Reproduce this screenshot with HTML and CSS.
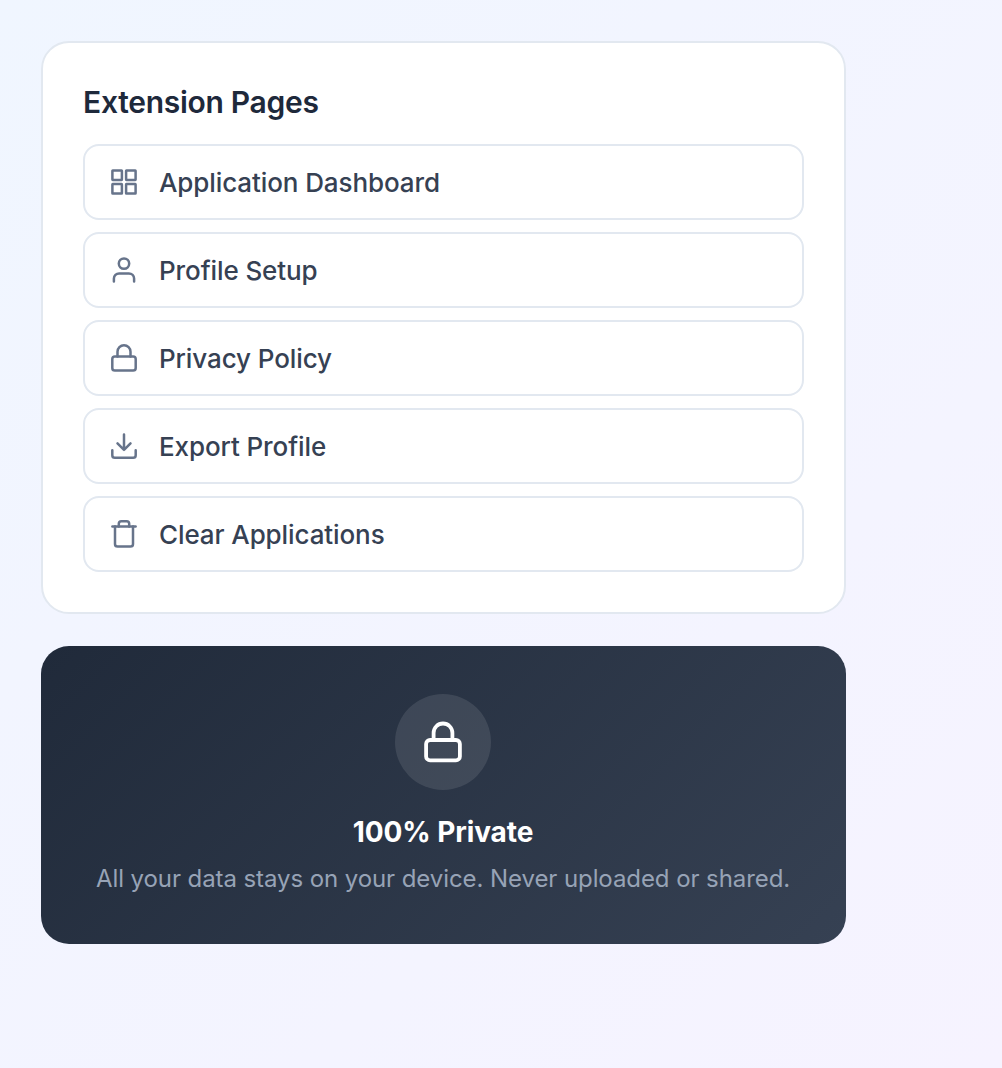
FILE: index.html
```html
<!DOCTYPE html>
<html lang="en">
<head>
  <meta charset="UTF-8">
  <meta name="viewport" content="width=device-width, initial-scale=1.0">
  <title>Extension Pages</title>
  <link rel="stylesheet" href="styles.css">
</head>
<body>
  <main class="sidebar">
    <section class="card">
      <h2 class="card-title">Extension Pages</h2>
      <nav class="links">
        <a class="link" href="#">
          <svg class="icon" viewBox="0 0 30 30">
            <rect x="3.4" y="3.4" width="9.5" height="9.5" rx="0.3"/>
            <rect x="17.1" y="3.4" width="9.5" height="9.5" rx="0.3"/>
            <rect x="3.4" y="17.1" width="9.5" height="9.5" rx="0.3"/>
            <rect x="17.1" y="17.1" width="9.5" height="9.5" rx="0.3"/>
          </svg>
          <span>Application Dashboard</span>
        </a>
        <a class="link" href="#">
          <svg class="icon" viewBox="0 0 30 30">
            <circle cx="15" cy="8.6" r="5.2"/>
            <path d="M4.9 26.6v-3a5.2 5.2 0 0 1 5.2-5.2h9.8a5.2 5.2 0 0 1 5.2 5.2v3"/>
          </svg>
          <span>Profile Setup</span>
        </a>
        <a class="link" href="#">
          <svg class="icon" viewBox="0 0 30 30">
            <rect x="3.3" y="13.4" width="23.4" height="14.1" rx="2.6"/>
            <path d="M8.5 13.4V8.7a6.5 6.5 0 0 1 13 0v4.7"/>
          </svg>
          <span>Privacy Policy</span>
        </a>
        <a class="link" href="#">
          <svg class="icon" viewBox="0 0 30 30">
            <path d="M3.3 19.2v5a2.6 2.6 0 0 0 2.6 2.6h18.2a2.6 2.6 0 0 0 2.6-2.6v-5"/>
            <path d="M8.5 12.3l6.5 6.5 6.5-6.5M15 18.8V3.4"/>
          </svg>
          <span>Export Profile</span>
        </a>
        <a class="link" href="#">
          <svg class="icon" viewBox="0 0 30 30">
            <path d="M3.4 7.5h23.2"/>
            <path d="M24 7.5v17.4a2.6 2.6 0 0 1-2.6 2.6H8.6A2.6 2.6 0 0 1 6 24.9V7.5"/>
            <path d="M9.8 7.5V4.8a2.6 2.6 0 0 1 2.6-2.6h5.2a2.6 2.6 0 0 1 2.6 2.6v2.7"/>
          </svg>
          <span>Clear Applications</span>
        </a>
      </nav>
    </section>

    <section class="privacy">
      <div class="privacy-icon">
        <svg viewBox="0 0 48 48">
          <rect x="7.1" y="22" width="33.8" height="20.4" rx="4"/>
          <path d="M14.6 22v-7.1a9.4 9.4 0 0 1 18.8 0V22"/>
        </svg>
      </div>
      <h3 class="privacy-title">100% Private</h3>
      <p class="privacy-text">All your data stays on your device. Never uploaded or shared.</p>
    </section>
  </main>
</body>
</html>
```

FILE: styles.css
```css
* { box-sizing: border-box; margin: 0; padding: 0; }
body {
  min-height: 100vh;
  padding: 41px;
  font-family: Inter, "Liberation Sans", sans-serif;
  background: linear-gradient(135deg, #f0f6ff 0%, #f6f3ff 100%);
}

.sidebar { display: flex; flex-direction: column; gap: 32px; width: 805px; }

.card { padding: 41px 40px 40px; background: #fff; border: 2px solid #e2e8f0; border-radius: 28px; }
.card-title {
  margin-bottom: 23px;
  font-size: 30px;
  font-weight: 600;
  line-height: 37px;
  letter-spacing: -0.28px;
  color: #1e293b;
}

.links { display: flex; flex-direction: column; gap: 12px; }
.link {
  display: flex;
  align-items: center;
  gap: 20px;
  height: 76px;
  padding: 0 24px;
  border: 2px solid #e2e8f0;
  border-radius: 16px;
  font-size: 26px;
  font-weight: 500;
  letter-spacing: -0.1px;
  color: #364153;
  text-decoration: none;
}
.icon {
  width: 30px;
  height: 30px;
  fill: none;
  stroke: #67748b;
  stroke-width: 2.5;
  stroke-linecap: round;
  stroke-linejoin: round;
}

.privacy {
  display: flex;
  flex-direction: column;
  align-items: center;
  padding: 48px 41px 47px 40px;
  border-radius: 28px;
  background: linear-gradient(135deg, #202a3a 0%, #364153 100%);
  color: #fff;
}
.privacy-icon {
  display: flex;
  align-items: center;
  justify-content: center;
  width: 96px;
  height: 96px;
  margin-bottom: 25px;
  border-radius: 50%;
  background: rgba(255, 255, 255, 0.1);
}
.privacy-icon svg {
  width: 48px;
  height: 48px;
  fill: none;
  stroke: #fff;
  stroke-width: 3.8;
  stroke-linecap: round;
  stroke-linejoin: round;
}
.privacy-title {
  margin-bottom: 12px;
  font-size: 28px;
  font-weight: 700;
  line-height: 34px;
  letter-spacing: -0.1px;
}
.privacy-text {
  font-size: 24px;
  line-height: 36px;
  letter-spacing: -0.08px;
  color: #97a3b6;
  white-space: nowrap;
}
```
